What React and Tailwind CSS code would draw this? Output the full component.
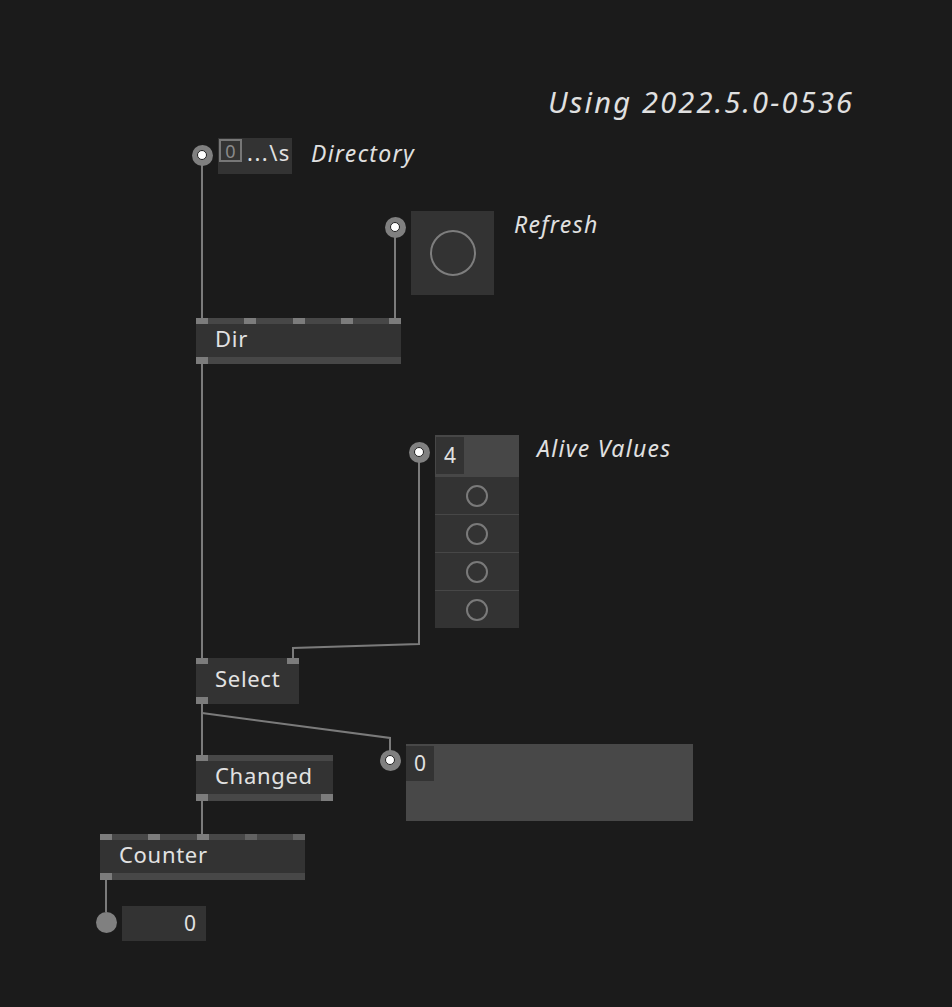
import React from 'react';

const FONT = { fontFamily: '"Noto Sans", "Open Sans", sans-serif' };

// pin on an IO box: grey ring with white centre
const Pad = ({ x, y, hollow = true }) => (
  <div
    className="absolute flex items-center justify-center rounded-full bg-[#808080] w-[21px] h-[21px]"
    style={{ left: x - 10.5, top: y - 10.5 }}
  >
    {hollow && <div className="w-[10px] h-[10px] rounded-full bg-white border border-[#222]" />}
  </div>
);

const Pin = ({ dim }) => (
  <div className={dim ? 'w-[12px] h-full bg-[#626262]' : 'w-[12px] h-full bg-[#7c7c7c]'} />
);

const Node = ({ x, y, w, label, top, bottom, bars = true }) => (
  <div className="absolute flex flex-col" style={{ left: x, top: y, width: w }}>
    <div className={`flex justify-between h-[6px] ${bars ? 'bg-[#474747]' : 'bg-[#333333]'}`}>
      {top.map((p, i) => (p === 0 ? <div key={i} /> : <Pin key={i} dim={p === 2} />))}
    </div>
    <div className="h-[33px] bg-[#333333] flex items-center pl-[19px] pb-[5px] text-[22px] leading-none tracking-[0.7px] text-[#e2e2e2]">
      {label}
    </div>
    <div className={`flex justify-between h-[7px] ${bars ? 'bg-[#474747]' : 'bg-[#333333]'}`}>
      {bottom.map((p, i) => (p === 0 ? <div key={i} /> : <Pin key={i} dim={p === 2} />))}
    </div>
  </div>
);

const Ring = () => (
  <div className="w-[22px] h-[22px] rounded-full border-2 border-[#7a7a7a]" />
);

const Label = ({ x, y, children, size = 'text-[23px] tracking-[1.3px]' }) => (
  <div className={`absolute italic leading-none text-[#e0e0e0] ${size}`} style={{ left: x, top: y }}>
    {children}
  </div>
);

export default function App() {
  return (
    <div className="relative w-[952px] h-[1007px] bg-[#1b1b1b] overflow-hidden" style={FONT}>
      {/* links */}
      <svg className="absolute inset-0" width="952" height="1007" fill="none" stroke="#7b7b7b" strokeWidth="2">
        <path d="M202 164 V318" />
        <path d="M395 236 V318" />
        <path d="M202 364 V658" />
        <path d="M419 461 V644 L293 648 V658" />
        <path d="M202 704 V755" />
        <path d="M202 713 L390 738 V751" />
        <path d="M202 800 V834" />
        <path d="M106 880 V912" />
      </svg>

      <Label x={548} y={87} size="text-[29px] tracking-[2.2px]">Using 2022.5.0-0536</Label>

      {/* Directory */}
      <Pad x={202} y={155} />
      <div className="absolute left-[218px] top-[138px] w-[74px] h-[36px] bg-[#333333] flex items-start">
        <div className="mt-[1px] ml-[1px] w-[23px] h-[23px] border-2 border-[#777] flex items-center justify-center text-[18px] leading-none text-[#8a8a8a]">
          0
        </div>
        <div className="ml-[5px] mt-[3px] text-[22px] leading-none tracking-[1.5px] text-[#e2e2e2]">...\s</div>
      </div>
      <Label x={311} y={142}>Directory</Label>

      {/* Refresh */}
      <Pad x={395} y={227} />
      <div className="absolute left-[411px] top-[211px] w-[83px] h-[84px] bg-[#333333] flex items-center justify-center">
        <div className="w-[46px] h-[46px] rounded-full border-2 border-[#7e7e7e] -mt-[1px]" />
      </div>
      <Label x={514} y={213}>Refresh</Label>

      <Node x={196} y={318} w={205} label="Dir" top={[1, 1, 1, 1, 1]} bottom={[1]} />

      {/* Alive Values */}
      <Pad x={419} y={452} />
      <div className="absolute left-[435px] top-[435px] w-[84px] flex flex-col">
        <div className="h-[41px] bg-[#474747] flex items-start">
          <div className="mt-[2px] ml-[1px] w-[28px] h-[37px] bg-[#333333] flex items-center justify-center text-[21px] leading-none text-[#e2e2e2]">
            4
          </div>
        </div>
        {[0, 1, 2, 3].map((i) => (
          <div key={i} className="h-[38px] bg-[#333333] border-t border-[#474747] flex items-center justify-center">
            <Ring />
          </div>
        ))}
      </div>
      <Label x={537} y={437}>Alive Values</Label>

      <Node x={196} y={658} w={103} label="Select" top={[1, 1]} bottom={[1]} bars={false} />

      <Node x={196} y={755} w={137} label="Changed" top={[1]} bottom={[1, 1]} />

      {/* output */}
      <Pad x={390} y={760} />
      <div className="absolute left-[406px] top-[744px] w-[287px] h-[77px] bg-[#484848]">
        <div className="mt-[2px] w-[28px] h-[35px] bg-[#333333] flex items-center justify-center text-[21px] leading-none text-[#e2e2e2]">
          0
        </div>
      </div>

      <Node x={100} y={834} w={205} label="Counter" top={[1, 1, 1, 2, 2]} bottom={[1]} />

      <Pad x={106} y={922} hollow={false} />
      <div className="absolute left-[122px] top-[906px] w-[84px] h-[35px] bg-[#333333] flex items-center justify-end pr-[10px] text-[21px] leading-none text-[#e2e2e2]">
        0
      </div>
    </div>
  );
}
